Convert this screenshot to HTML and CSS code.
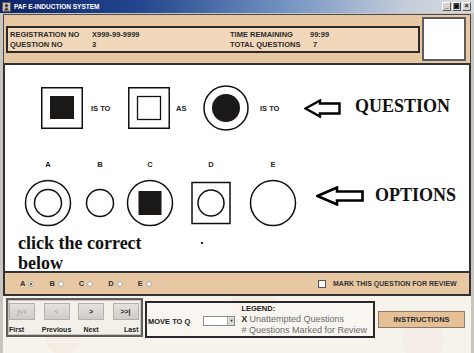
FILE: index.html
```html
<!DOCTYPE html>
<html lang="en">
<head>
  <meta charset="UTF-8" />
  <title>PAF E-INDUCTION SYSTEM</title>
  <link rel="stylesheet" href="styles.css">
</head>
<body>

<div class="titlebar">
  <svg class="app-icon" width="9" height="10" viewBox="0 0 9 10">
    <rect x="0.5" y="0.5" width="8" height="9" fill="#c9c2b4" stroke="#5a5a5a"/>
    <circle cx="4.5" cy="3.5" r="1.6" fill="#3a3a3a"/>
    <path d="M2 8.5 L4.5 5 L7 8.5 Z" fill="#3a3a3a"/>
  </svg>
  <span class="title">PAF E-INDUCTION SYSTEM</span>
  <div class="win-btns">
    <span class="win-btn">_</span>
    <span class="win-btn">&#9635;</span>
    <span class="win-btn">&#215;</span>
  </div>
</div>

<div class="frame">

  <!-- candidate info -->
  <div class="header">
    <div class="info">
      <span class="lbl">REGISTRATION NO</span><span class="lbl">X999-99-9999</span>
      <span class="lbl">TIME REMAINING</span><span class="lbl">99:99</span>
      <span class="lbl">QUESTION NO</span><span class="lbl">3</span>
      <span class="lbl">TOTAL QUESTIONS</span><span class="lbl total">7</span>
    </div>
    <div class="photo"></div>
  </div>

  <!-- question area -->
  <div class="question">
    <div class="q-row">
      <svg class="fig" width="42" height="42" viewBox="0 0 42 42">
        <rect x="0.75" y="0.75" width="40.5" height="40.5" fill="none" stroke="#111" stroke-width="1.5"/>
        <rect x="9" y="9" width="24" height="23" fill="#1b1818"/>
      </svg>
      <span class="word w-isto">IS TO</span>
      <svg class="fig" width="42" height="42" viewBox="0 0 42 42">
        <rect x="0.75" y="0.75" width="40.5" height="40.5" fill="none" stroke="#111" stroke-width="1.5"/>
        <rect x="9.5" y="9.5" width="23" height="23" fill="none" stroke="#111" stroke-width="1.3"/>
      </svg>
      <span class="word w-as">AS</span>
      <svg class="fig" width="46" height="46" viewBox="0 0 46 46">
        <circle cx="23" cy="23" r="22" fill="none" stroke="#111" stroke-width="1.5"/>
        <circle cx="23" cy="23" r="14" fill="#1b1818"/>
      </svg>
      <span class="word w-isto2">IS TO</span>
      <svg class="arrow" width="37" height="19" viewBox="0 0 37 19">
        <path d="M1.5 9.5 L16 1.5 L16 4.5 L35.5 4.5 L35.5 14.5 L16 14.5 L16 17.5 Z" fill="none" stroke="#000" stroke-width="2.4" stroke-linejoin="miter"/>
      </svg>
      <span class="big">QUESTION</span>
    </div>

    <div class="opt-row">
      <div class="opt">
        <span class="letter">A</span>
        <svg width="48" height="48" viewBox="0 0 48 48">
          <circle cx="24" cy="24" r="22.5" fill="none" stroke="#111" stroke-width="1.5"/>
          <circle cx="24" cy="24" r="13.5" fill="none" stroke="#111" stroke-width="1.5"/>
        </svg>
      </div>
      <div class="opt opt-b">
        <span class="letter">B</span>
        <svg width="48" height="48" viewBox="0 0 48 48">
          <circle cx="24" cy="24" r="13.5" fill="none" stroke="#111" stroke-width="1.5"/>
        </svg>
      </div>
      <div class="opt">
        <span class="letter">C</span>
        <svg width="48" height="48" viewBox="0 0 48 48">
          <circle cx="24" cy="24" r="22.5" fill="none" stroke="#111" stroke-width="1.5"/>
          <rect x="12.5" y="12" width="23" height="24" fill="#1b1818"/>
        </svg>
      </div>
      <div class="opt opt-d">
        <span class="letter">D</span>
        <svg width="48" height="48" viewBox="0 0 48 48">
          <rect x="5" y="3.5" width="38" height="41" fill="none" stroke="#111" stroke-width="1.5"/>
          <circle cx="24" cy="24" r="13" fill="none" stroke="#111" stroke-width="1.5"/>
        </svg>
      </div>
      <div class="opt opt-e">
        <span class="letter">E</span>
        <svg width="48" height="48" viewBox="0 0 48 48">
          <circle cx="24" cy="24" r="22.5" fill="none" stroke="#111" stroke-width="1.5"/>
        </svg>
      </div>
      <div class="pointer">
        <svg class="arrow" width="48" height="20" viewBox="0 0 48 20">
          <path d="M1.5 10 L21 1.5 L21 5.5 L46.5 5.5 L46.5 14.5 L21 14.5 L21 18.5 Z" fill="none" stroke="#000" stroke-width="2.6"/>
        </svg>
        <span class="big">OPTIONS</span>
      </div>
    </div>

    <p class="hint"><span>click the correct</span><span class="dot"></span><br>below</p>
  </div>

  <!-- answer choices -->
  <div class="answer">
    <div class="choices">
      <span class="choice">A <span class="radio checked"></span></span>
      <span class="choice">B <span class="radio"></span></span>
      <span class="choice">C <span class="radio"></span></span>
      <span class="choice">D <span class="radio"></span></span>
      <span class="choice">E <span class="radio"></span></span>
    </div>
    <div class="review">
      <span class="check"></span>
      <span>MARK THIS QUESTION FOR REVIEW</span>
    </div>
  </div>

  <!-- navigation -->
  <div class="bottom">
    <div class="nav">
      <button class="nav-btn off">|&lt;&lt;</button>
      <button class="nav-btn off">&lt;</button>
      <button class="nav-btn">&gt;</button>
      <button class="nav-btn">&gt;&gt;|</button>
      <span class="nav-lbl first">First</span>
      <span class="nav-lbl">Previous</span>
      <span class="nav-lbl">Next</span>
      <span class="nav-lbl last">Last</span>
    </div>

    <div class="jump">
      <span class="move">MOVE TO Q</span>
      <div class="select"><span class="select-arrow">&#9660;</span></div>
      <div class="legend">
        <span class="legend-title">LEGEND:</span>
        <span><b>X</b> Unattempted Questions</span>
        <span># Questions Marked for Review</span>
      </div>
    </div>

    <button class="instructions">INSTRUCTIONS</button>
  </div>

</div>

</body>
</html>
```

FILE: styles.css
```css
* { margin: 0; padding: 0; box-sizing: border-box; }
body {
  width: 474px;
  height: 353px;
  overflow: hidden;
  background: #c9c6c0;
  font-family: 'Liberation Sans', Arial, sans-serif;
  color: #222;
}

/* --- Window title --- */
.titlebar {
  height: 13px;
  display: flex;
  align-items: center;
  padding: 0 3px 0 2px;
  background: linear-gradient(90deg, #0d2466 0%, #24478f 30%, #7392c2 60%, #c3ccd9 85%, #d9dce1 100%);
}
.app-icon { flex: none; }
.title {
  margin-left: 3px;
  color: #fff;
  font-size: 6.5px;
  font-weight: bold;
}
.win-btns {
  margin-left: auto;
  display: flex;
  gap: 1px;
}
.win-btn {
  width: 9px;
  height: 9px;
  background: #d6d3ce;
  border: 1px solid #fff;
  border-right-color: #555;
  border-bottom-color: #555;
  font-size: 7px;
  line-height: 6px;
  text-align: center;
  color: #111;
  font-weight: bold;
}

.frame {
  margin: 1px 3px 0 3px;
}

/* --- Header --- */
.header {
  height: 49px;
  background: #e8c8a2;
  border: 1px solid #4a4a4a;
  border-bottom: none;
  display: flex;
  align-items: center;
  padding-left: 2px;
}
.info {
  width: 414px;
  height: 27px;
  background: #f1d7ba;
  border: 2px solid #2b2b2b;
  display: grid;
  grid-template-columns: 82px 138px 80px auto;
  align-content: center;
  padding-left: 2px;
  row-gap: 1px;
}
.lbl {
  font-size: 7.5px;
  font-weight: bold;
  color: #2a2a2a;
  line-height: 9px;
}
.total { padding-left: 3px; }
.photo {
  width: 44px;
  height: 44px;
  margin-left: 2px;
  background: #fff;
  border: 2px solid #5c5c5c;
}

/* --- Question --- */
.question {
  height: 210px;
  background: #fff;
  border: 2px solid #333;
  overflow: hidden;
}
.q-row {
  height: 46px;
  margin-top: 20px;
  padding-left: 36px;
  display: flex;
  align-items: center;
}
.fig, .arrow { flex: none; display: block; }
.word {
  font-size: 7.5px;
  font-weight: bold;
  color: #222;
}
.w-isto { width: 45px; padding-left: 8px; }
.w-as { width: 33px; padding-left: 6px; }
.w-isto2 { width: 55px; padding-left: 11px; }
.big {
  font-family: 'Liberation Serif', 'Times New Roman', serif;
  font-weight: bold;
  font-size: 18px;
  color: #111;
}
.q-row .big { margin-left: 14px; margin-top: -3px; }

.opt-row {
  margin-top: 29px;
  padding-left: 18px;
  display: flex;
  align-items: center;
}
.opt {
  width: 50px;
  display: flex;
  flex-direction: column;
  align-items: center;
}
.opt-b { margin-left: 2px; }
.opt-d { margin-left: 11px; }
.opt-e { margin-left: 12px; }
.letter {
  font-size: 7.5px;
  font-weight: bold;
  line-height: 9px;
  margin-bottom: 10px;
}
.opt svg { display: block; }
.pointer {
  margin-left: 18px;
  margin-top: 4px;
  display: flex;
  align-items: center;
}
.pointer .big { margin-left: 11px; }

.hint {
  margin-top: 6px;
  padding-left: 13px;
  font-family: 'Liberation Serif', 'Times New Roman', serif;
  font-weight: bold;
  font-size: 18px;
  line-height: 20px;
  color: #111;
}
.dot {
  display: inline-block;
  width: 2px;
  height: 2px;
  background: #222;
  margin-left: 59px;
  vertical-align: 5px;
}

/* --- Answer bar --- */
.answer {
  height: 23px;
  background: #e8c8a2;
  border: 2px solid #333;
  border-top: none;
  display: flex;
  align-items: center;
}
.choices {
  width: 313px;
  padding-left: 15px;
  display: flex;
  gap: 15px;
}
.choice {
  display: flex;
  align-items: center;
  gap: 3px;
  font-size: 7.5px;
  font-weight: bold;
  color: #333;
}
.radio {
  width: 6px;
  height: 6px;
  border-radius: 50%;
  border: 1px solid #a9a9a9;
  background: #f6f6f6;
  position: relative;
}
.radio.checked::after {
  content: "";
  position: absolute;
  left: 1px;
  top: 1px;
  width: 2px;
  height: 2px;
  border-radius: 50%;
  background: #333;
}
.review {
  display: flex;
  align-items: center;
  gap: 7px;
  font-size: 7px;
  font-weight: bold;
  color: #333;
}
.check {
  width: 8px;
  height: 8px;
  background: #fff;
  border: 1px solid #555;
}

/* --- Bottom navigation --- */
.bottom {
  height: 57px;
  background: #f6f2ec;
  background-image:
    radial-gradient(circle at 60px 40px, rgba(240, 170, 120, 0.07) 0 18px, transparent 19px),
    radial-gradient(circle at 250px 10px, rgba(240, 190, 140, 0.08) 0 22px, transparent 23px),
    radial-gradient(circle at 420px 45px, rgba(230, 170, 170, 0.07) 0 20px, transparent 21px);
  display: flex;
  align-items: flex-start;
  padding: 2px 0 0 3px;
}
.nav {
  width: 137px;
  height: 39px;
  border: 2px solid #5e5e5e;
  box-shadow: inset 0 0 0 1px #c9c4bc;
  background: #f3efe9;
  display: grid;
  grid-template-columns: repeat(4, 26px);
  column-gap: 8.5px;
  padding: 3px 0 0 1px;
}
.nav-btn {
  height: 17px;
  background: linear-gradient(#e3e1de, #cfccc8);
  border: 1px solid #b4b1ac;
  font-family: 'Liberation Sans', Arial, sans-serif;
  font-size: 7px;
  font-weight: bold;
  color: #222;
}
.nav-btn.off { color: #9a9a9a; font-weight: normal; }
.nav-lbl {
  margin-top: 4px;
  font-size: 7px;
  font-weight: bold;
  line-height: 9px;
  text-align: center;
  white-space: nowrap;
  justify-self: center;
}
.nav-lbl.first { justify-self: start; }
.nav-lbl.last { justify-self: end; }

.jump {
  width: 230px;
  height: 37px;
  margin: 3px 0 0 2px;
  border: 2px solid #2a2a2a;
  background: rgba(255, 255, 255, 0.35);
  display: flex;
  align-items: center;
  padding-left: 1px;
}
.move {
  font-size: 7.5px;
  font-weight: bold;
  margin-top: 3px;
}
.select {
  width: 32px;
  height: 10px;
  margin: 3px 0 0 13px;
  background: #fff;
  border: 1px solid #8d8d8d;
  display: flex;
  justify-content: flex-end;
}
.select-arrow {
  width: 7px;
  background: #dcdad6;
  border-left: 1px solid #aaa;
  font-size: 4px;
  line-height: 8px;
  text-align: center;
  color: #222;
}
.legend {
  margin-left: 6px;
  display: flex;
  flex-direction: column;
  font-size: 9px;
  line-height: 11px;
  color: #6a6a6a;
}
.legend b { font-size: 8.5px; color: #222; }
.legend-title {
  font-size: 7.5px;
  font-weight: bold;
  color: #222;
}

.instructions {
  width: 87px;
  height: 17px;
  margin: 13px 0 0 3px;
  background: #e6c197;
  border: 1px solid #8b7b68;
  font-family: 'Liberation Sans', Arial, sans-serif;
  font-size: 7.5px;
  font-weight: bold;
  color: #2a2a2a;
}
```
